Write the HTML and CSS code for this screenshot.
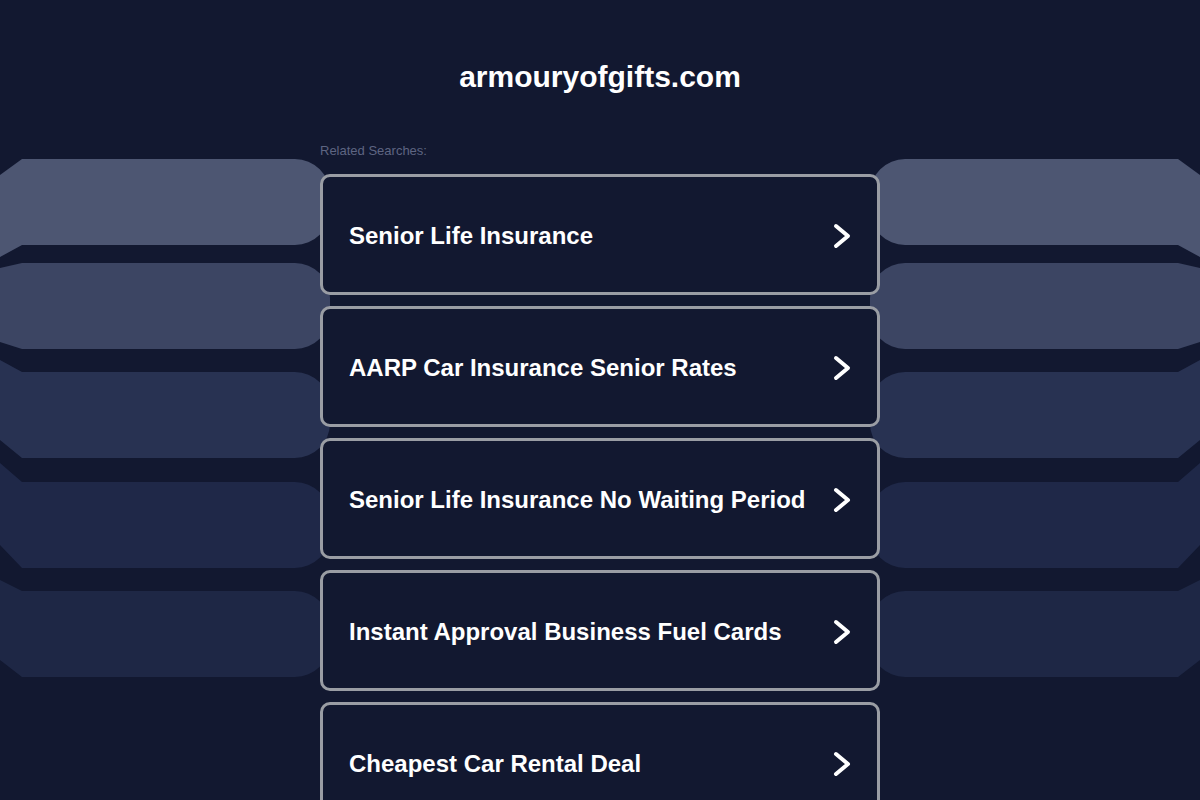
FILE: index.html
```html
<!DOCTYPE html>
<html lang="en">
<head>
<meta charset="utf-8">
<title>armouryofgifts.com</title>
<link rel="stylesheet" href="styles.css">
</head>
<body>
<header class="header">
  <h1 class="domain">armouryofgifts.com</h1>
</header>
<main class="content">
  <p class="related-label">Related Searches:</p>
  <ul class="links">
    <li><a class="link-card" href="#"><span class="link-text">Senior Life Insurance</span><svg class="chev" viewBox="0 0 18 26" width="18" height="26"><polyline points="3,3 15,13 3,23"/></svg></a></li>
    <li><a class="link-card" href="#"><span class="link-text">AARP Car Insurance Senior Rates</span><svg class="chev" viewBox="0 0 18 26" width="18" height="26"><polyline points="3,3 15,13 3,23"/></svg></a></li>
    <li><a class="link-card" href="#"><span class="link-text">Senior Life Insurance No Waiting Period</span><svg class="chev" viewBox="0 0 18 26" width="18" height="26"><polyline points="3,3 15,13 3,23"/></svg></a></li>
    <li><a class="link-card" href="#"><span class="link-text">Instant Approval Business Fuel Cards</span><svg class="chev" viewBox="0 0 18 26" width="18" height="26"><polyline points="3,3 15,13 3,23"/></svg></a></li>
    <li><a class="link-card" href="#"><span class="link-text">Cheapest Car Rental Deal</span><svg class="chev" viewBox="0 0 18 26" width="18" height="26"><polyline points="3,3 15,13 3,23"/></svg></a></li>
  </ul>
</main>
</body>
</html>
```
FILE: styles.css
```css
html, body {
  margin: 0;
  padding: 0;
}

body {
  min-height: 800px;
  font-family: "Liberation Sans", Arial, sans-serif;
  color: #ffffff;
  background-color: #121830;
  background-image: url("data:image/svg+xml,%3Csvg xmlns='http://www.w3.org/2000/svg' width='1200' height='800' viewBox='0 0 1200 800'%3E%3Cpath fill='%234d5672' d='M0,175 L22,159 L295,159 A35,35 0 0 1 330,194 L330,210 A35,35 0 0 1 295,245 L22,245 L0,257 Z'/%3E%3Cpath fill='%233c4563' d='M0,268 L22,263 L295,263 A35,35 0 0 1 330,298 L330,314 A35,35 0 0 1 295,349 L22,349 L0,342 Z'/%3E%3Cpath fill='%23283252' d='M0,360 L22,372 L295,372 A35,35 0 0 1 330,407 L330,423 A35,35 0 0 1 295,458 L22,458 L0,440 Z'/%3E%3Cpath fill='%231f2848' d='M0,463 L22,482 L295,482 A35,35 0 0 1 330,517 L330,533 A35,35 0 0 1 295,568 L22,568 L0,545 Z'/%3E%3Cpath fill='%231e2745' d='M0,580 L22,591 L295,591 A35,35 0 0 1 330,626 L330,642 A35,35 0 0 1 295,677 L22,677 L0,660 Z'/%3E%3Cpath fill='%234d5672' d='M1200,175 L1178,159 L905,159 A35,35 0 0 0 870,194 L870,210 A35,35 0 0 0 905,245 L1178,245 L1200,257 Z'/%3E%3Cpath fill='%233c4563' d='M1200,268 L1178,263 L905,263 A35,35 0 0 0 870,298 L870,314 A35,35 0 0 0 905,349 L1178,349 L1200,342 Z'/%3E%3Cpath fill='%23283252' d='M1200,360 L1178,372 L905,372 A35,35 0 0 0 870,407 L870,423 A35,35 0 0 0 905,458 L1178,458 L1200,440 Z'/%3E%3Cpath fill='%231f2848' d='M1200,463 L1178,482 L905,482 A35,35 0 0 0 870,517 L870,533 A35,35 0 0 0 905,568 L1178,568 L1200,545 Z'/%3E%3Cpath fill='%231e2745' d='M1200,580 L1178,591 L905,591 A35,35 0 0 0 870,626 L870,642 A35,35 0 0 0 905,677 L1178,677 L1200,660 Z'/%3E%3C/svg%3E");
  background-repeat: no-repeat;
  background-position: center top;
}

.header {
  padding-top: 60px;
  text-align: center;
}

.domain {
  margin: 0;
  font-size: 30px;
  line-height: 34px;
  font-weight: 700;
  color: #ffffff;
}

.content {
  width: 560px;
  margin: 0 auto;
  padding-top: 49px;
}

.related-label {
  margin: 0 0 15px 0;
  font-size: 13px;
  line-height: 16px;
  color: #5e6582;
}

.links {
  list-style: none;
  margin: 0;
  padding: 0;
  display: flex;
  flex-direction: column;
  gap: 11px;
}

.link-card {
  box-sizing: border-box;
  height: 121px;
  display: flex;
  align-items: center;
  justify-content: space-between;
  padding: 2px 26px 0 26px;
  border: 3px solid #9a9da4;
  border-radius: 10px;
  background-color: #121830;
  color: #ffffff;
  text-decoration: none;
}

.link-text {
  font-size: 24px;
  font-weight: 700;
  line-height: 28px;
}

.chev {
  flex: none;
}

.chev polyline {
  fill: none;
  stroke: #ffffff;
  stroke-width: 4;
  stroke-linecap: round;
  stroke-linejoin: round;
}
```
